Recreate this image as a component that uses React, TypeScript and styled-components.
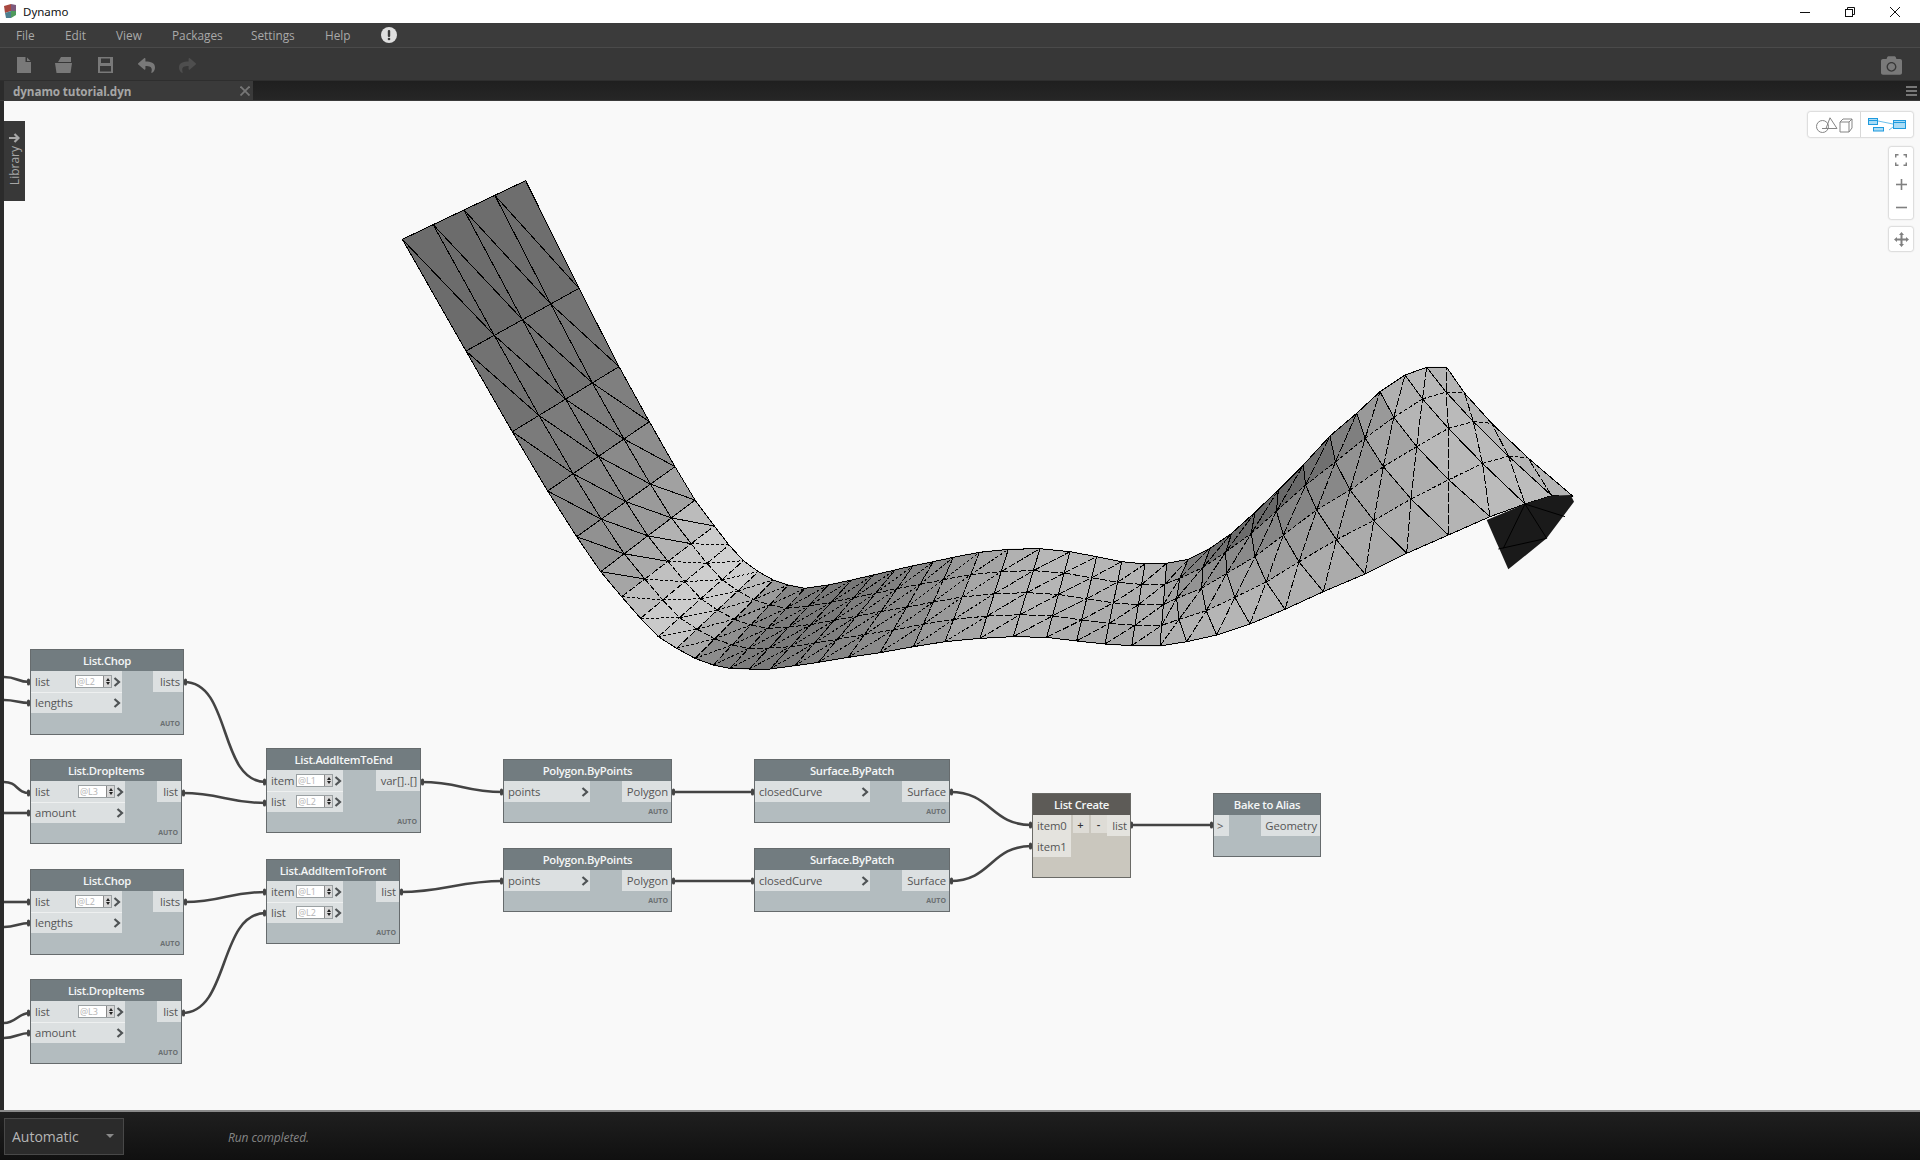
import React, { useMemo } from 'react';
import styled, { createGlobalStyle } from 'styled-components';
import { FaReply, FaShare, FaCamera } from 'react-icons/fa';

const GlobalStyle = createGlobalStyle`
  html, body { margin: 0; padding: 0; width: 1920px; height: 1160px; overflow: hidden; background: #f9f9f9; }
  * { box-sizing: border-box; }
  body { font-family: "Open Sans", "Noto Sans", sans-serif; }
`;

const Page = styled.div`
  width: 1920px; height: 1160px; display: flex; flex-direction: column;
`;
const TitleBar = styled.header`
  height: 23px; background: #fff; display: flex; align-items: center; padding-left: 4px; color: #111; font-size: 11.5px;
`;
const TitleText = styled.span`margin-left: 6px; font-family: "Noto Sans", "Open Sans", sans-serif;`;
const WindowControls = styled.div`margin-left: auto; display: flex; align-items: center; padding-right: 20px; gap: 35px;`;
const MenuBar = styled.nav`
  height: 25px; background: #3b3b3b; display: flex; align-items: center; border-bottom: 1px solid #4a4a4a; padding-left: 16px; color: #a9a9a9; font-size: 11.8px;
`;
const MenuItem = styled.span<{ $w: number }>`width: ${p => p.$w}px; flex: none;`;
const Toolbar = styled.div`
  height: 33px; background: #373737; display: flex; align-items: center; border-bottom: 1px solid #2e2e2e; padding: 2px 18px 0 17px;
`;
const ToolSlot = styled.span<{ $w: number; $c?: string }>`width: ${p => p.$w}px; flex: none; display: flex; align-items: center; color: ${p => p.$c || '#797979'};`;
const ToolEnd = styled.span`margin-left: auto; display: flex; color: #797979;`;
const TabBar = styled.div`
  height: 20px; display: flex; background: linear-gradient(#1f1f1f, #262626); border-bottom: 1px solid #3a3a3a; align-items: stretch;
`;
const TabEdge = styled.span`width: 4px; background: #2b2b2b;`;
const Tab = styled.div`
  width: 249px; background: #3a3a3a; display: flex; align-items: center; justify-content: space-between; padding: 0 3px 0 9px; color: #a6a6a6; font-weight: 700; font-size: 11.7px; letter-spacing: -0.1px;
`;
const TabMenu = styled.span`margin-left: auto; width: 11px; margin-right: 3px; display: flex; flex-direction: column; justify-content: center; gap: 2px;`;
const TabMenuBar = styled.i`display: block; height: 2px; background: #777;`;
const Middle = styled.div`flex: 1; display: flex; min-height: 0;`;
const LeftStrip = styled.div`width: 4px; background: #2b2b2b; flex: none;`;
const Canvas = styled.main`flex: 1; position: relative; background: #f9f9f9; overflow: hidden;`;
const Overlay = styled.svg`position: absolute; left: 0; top: 0; width: 1916px; height: 1009px;`;
const LibraryTab = styled.div`
  position: absolute; left: 0; top: 20px; width: 21px; height: 80px; background: #383838; color: #a6a6a6; display: flex; flex-direction: column; align-items: center; padding-top: 12px; gap: 3px; font-size: 12px;
`;
const LibraryLabel = styled.span`writing-mode: vertical-rl; transform: rotate(180deg); line-height: 1;`;
const FloatingPanel = styled.div<{ $top: number; $right: number }>`
  position: absolute; top: ${p => p.$top}px; right: ${p => p.$right}px; background: #fff; box-shadow: 0 0 2px rgba(0,0,0,.4); border-radius: 2px; display: flex;
`;
const ViewToggle = styled.span<{ $w: number; $border?: boolean }>`
  width: ${p => p.$w}px; height: 25px; display: flex; align-items: center; justify-content: center; ${p => p.$border ? 'border-right: 1px solid #d8d8d8;' : ''}
`;
const ZoomColumn = styled.div`width: 24px; display: flex; flex-direction: column; align-items: center; color: #808080;`;
const ZoomButton = styled.span<{ $h: number }>`height: ${p => p.$h}px; display: flex; align-items: center; justify-content: center;`;

const NodeCard = styled.section<{ $x: number; $y: number; $w: number; $h: number; $warm?: boolean }>`
  position: absolute; left: ${p => p.$x - 4}px; top: ${p => p.$y - 101}px; width: ${p => p.$w}px; height: ${p => p.$h}px;
  background: ${p => p.$warm ? '#cac7be' : '#b3bcbf'}; border: 1px solid ${p => p.$warm ? '#6a6a66' : '#666b6d'}; display: flex; flex-direction: column;
`;
const NodeHeader = styled.h3<{ $warm?: boolean }>`
  margin: 0; height: 21px; flex: none; background: ${p => p.$warm ? '#5d5b57' : '#727c80'}; color: #f4f6f6; font-size: 11.3px; font-weight: 600; text-align: center; line-height: 21px; letter-spacing: -0.28px;
`;
const NodeBody = styled.div`display: flex; justify-content: space-between; align-items: flex-start; flex: none;`;
const InputColumn = styled.div<{ $w: number }>`width: ${p => p.$w}px; flex: none; display: flex; flex-direction: column;`;
const PortRow = styled.div<{ $warm?: boolean; $sep?: boolean }>`
  height: 21px; background: ${p => p.$warm ? '#e4e3de' : '#dce0e1'}; display: flex; align-items: center; padding: 0 1px 0 4px; color: #555; font-size: 11.3px; ${p => p.$sep ? 'box-shadow: inset 0 1px 0 #eef0f0;' : ''}
`;
const PortLabel = styled.span`letter-spacing: -0.1px;`;
const OutputPort = styled.div<{ $w: number; $warm?: boolean }>`
  width: ${p => p.$w}px; height: 21px; flex: none; background: ${p => p.$warm ? '#e4e3de' : '#dce0e1'}; color: #555; font-size: 11.3px; display: flex; align-items: center; justify-content: flex-end; padding-right: 3px; letter-spacing: -0.1px; white-space: nowrap;
`;
const OutputLeft = styled(OutputPort)`justify-content: flex-start; padding-left: 3px;`;
const LevelBox = styled.span`
  margin-left: auto; width: 37px; height: 13px; background: #fff; border: 1px solid #9aa0a2; display: flex; align-items: stretch; color: #b4b4b4; font-size: 9px; line-height: 11px; padding-left: 1px;
`;
const LevelText = styled.span`flex: 1;`;
const Spinner = styled.span`width: 8px; flex: none; background: #d8d8d8; border-left: 1px solid #888; display: flex; flex-direction: column; justify-content: space-evenly; align-items: center;`;
const SpinUp = styled.i`width: 0; height: 0; border-left: 2px solid transparent; border-right: 2px solid transparent; border-bottom: 3px solid #222;`;
const SpinDown = styled.i`width: 0; height: 0; border-left: 2px solid transparent; border-right: 2px solid transparent; border-top: 3px solid #222;`;
const ChevronWrap = styled.svg<{ $auto?: boolean }>`width: 8px; height: 10px; flex: none; margin-left: ${p => p.$auto ? 'auto' : '1px'};`;
const NodeFooter = styled.div`margin-top: auto; height: 15px; flex: none; display: flex; justify-content: flex-end; padding-right: 3px; color: #6a6f71; font-size: 7px; font-weight: 700; line-height: 10px;`;
const AddRemove = styled.div`display: flex; gap: 2px; margin-left: 1px;`;
const SmallButton = styled.span`width: 16px; height: 18px; background: #dedcd6; color: #333; font-size: 11px; font-weight: 600; display: flex; align-items: center; justify-content: center;`;

const StatusBar = styled.footer`
  height: 50px; border-top: 2px solid #8a8a8a; background: linear-gradient(#1f1f1f, #101010); display: flex; align-items: center; padding-left: 4px;
`;
const RunSelect = styled.div`
  width: 120px; height: 37px; background: #2b2b2b; border: 1px solid #484848; display: flex; align-items: center; padding: 0 6px 0 7px; color: #b5b5b5; font-size: 14px; justify-content: space-between;
`;
const RunCaret = styled.i`width: 0; height: 0; border-left: 4px solid transparent; border-right: 4px solid transparent; border-top: 4px solid #8a8a8a; margin-right: 3px;`;
const RunStatus = styled.span`margin-left: 104px; margin-top: 2px; color: #858585; font-style: italic; font-size: 12px; letter-spacing: -0.1px;`;

/* ---- mesh ---- */
type St = { l: number[]; u: number[]; m?: number[]; gl: number; gu: number };
const z7 = (x: number, y: number) => [380 + x / 3, 170 + y / 3];
const z9 = (x: number, y: number) => [700 + x / 3, 500 + y / 3];
const z8 = (x: number, y: number) => [1150 + x / 3, 350 + y / 3];
const s = (z: (x: number, y: number) => number[], a: number, b: number, c: number, d: number, gl: number, gu: number, mx?: number, my?: number): St =>
  ({ l: z(a, b), u: z(c, d), m: mx !== undefined ? z(mx, my as number) : undefined, gl, gu });

const stations: St[] = [
  s(z7, 67, 208, 437, 32, 106, 108),
  s(z7, 258, 543, 597, 355, 110, 112),
  s(z7, 397, 785, 717, 590, 118, 122),
  s(z7, 503, 963, 808, 755, 128, 134),
  s(z7, 590, 1100, 885, 890, 138, 152),
  s(z7, 662, 1205, 945, 990, 150, 178),
  s(z7, 725, 1280, 1003, 1068, 178, 205),
  s(z7, 782, 1345, 1047, 1125, 198, 210),
  s(z7, 835, 1400, 1090, 1172, 205, 212),
  s(z7, 890, 1435, 1135, 1205, 186, 205),
  s(z7, 945, 1465, 1180, 1230, 150, 172),
  s(z7, 1000, 1485, 1225, 1245, 128, 142),
  s(z7, 1050, 1495, 1275, 1255, 124, 126),
  s(z9, 148, 507, 385, 255, 122, 118),
  s(z9, 210, 507, 455, 240, 122, 116),
  s(z9, 285, 497, 520, 225, 126, 118),
  s(z9, 355, 487, 585, 210, 130, 124),
  s(z9, 445, 472, 640, 197, 136, 130),
  s(z9, 540, 458, 700, 185, 140, 136),
  s(z9, 640, 440, 760, 172, 146, 144),
  s(z9, 735, 425, 838, 157, 160, 158),
  s(z9, 840, 415, 925, 148, 172, 172),
  s(z9, 940, 410, 1020, 146, 180, 182),
  s(z9, 1040, 412, 1110, 155, 176, 186),
  s(z9, 1130, 423, 1190, 170, 170, 186),
  s(z9, 1215, 432, 1265, 185, 166, 182),
  s(z9, 1295, 437, 1335, 192, 170, 182),
  s(z9, 1380, 438, 1400, 190, 176, 172),
  s(z8, 110, 875, 115, 628, 178, 125, 80, 745),
  s(z8, 200, 855, 180, 595, 184, 100, 155, 715),
  s(z8, 300, 822, 245, 550, 186, 92, 230, 670),
  s(z8, 405, 778, 315, 487, 182, 88, 315, 620),
  s(z8, 520, 725, 385, 420, 176, 86, 400, 555),
  s(z8, 645, 672, 460, 345, 174, 92, 500, 480),
  s(z8, 770, 610, 540, 258, 174, 104, 600, 420),
  s(z8, 895, 555, 620, 190, 178, 128, 700, 350),
  s(z8, 1020, 500, 690, 125, 186, 165, 800, 290),
  s(z8, 1125, 462, 765, 75, 190, 182, 895, 235),
  s(z8, 1205, 437, 830, 52, 186, 185, 970, 215),
  s(z8, 1270, 440, 890, 52, 176, 178, 1025, 220),
];

const pointAt = (st: St, v: number): number[] => {
  const mid = st.m || [(st.l[0] + st.u[0]) / 2, (st.l[1] + st.u[1]) / 2];
  const a = 2 * (v - 0.5) * (v - 1), b = -4 * v * (v - 1), c = 2 * v * (v - 0.5);
  return [a * st.l[0] + b * mid[0] + c * st.u[0], a * st.l[1] + b * mid[1] + c * st.u[1]];
};
const dashFor = (i: number, kind: 'st' | 'row' | 'diag') => {
  if (i < 6) return undefined;
  if (i < 13) return kind === 'st' ? '7 2' : kind === 'row' ? '6 2' : '3 2';
  if (i < 21) return kind === 'st' ? '8 1' : kind === 'row' ? '5 2' : '3 2';
  if (i < 28) return kind === 'st' ? undefined : kind === 'row' ? '7 2' : '7 2';
  return kind === 'st' ? undefined : kind === 'row' ? '4 2' : '9 2';
};

const SurfaceMesh = () => {
  const mesh = useMemo(() => {
    const R = 4;
    const grid = stations.map(st => Array.from({ length: R + 1 }, (_, j) => pointAt(st, j / R)));
    const cells: { pts: string; c: string }[] = [];
    const lines: { a: number[]; b: number[]; dash?: string }[] = [];
    for (let i = 0; i < stations.length; i++) {
      for (let j = 0; j < R; j++) lines.push({ a: grid[i][j], b: grid[i][j + 1], dash: dashFor(i, 'st') });
      if (i === stations.length - 1) break;
      for (let j = 0; j <= R; j++) {
        lines.push({ a: grid[i][j], b: grid[i + 1][j], dash: j === 0 || j === R ? undefined : dashFor(i, 'row') });
        if (j < R) {
          const v = Math.pow((j + 0.5) / R, 1.5);
          const g0 = stations[i].gl + (stations[i].gu - stations[i].gl) * v;
          const g1 = stations[i + 1].gl + (stations[i + 1].gu - stations[i + 1].gl) * v;
          const g = Math.round((g0 + g1) / 2);
          cells.push({ pts: [grid[i][j], grid[i + 1][j], grid[i + 1][j + 1], grid[i][j + 1]].map(p => p.join(',')).join(' '), c: `rgb(${g},${g},${g})` });
          lines.push({ a: grid[i][j], b: grid[i + 1][j + 1], dash: dashFor(i, 'diag') });
        }
      }
    }
    return { cells, lines };
  }, []);
  const cap = [[1010, 510], [1075, 658], [1190, 565], [1272, 455], [1262, 435], [1205, 437], [1125, 462]].map(p => z8(p[0], p[1]));
  return (
    <g>
      {mesh.cells.map((c, i) => <polygon key={i} points={c.pts} fill={c.c} stroke={c.c} strokeWidth={0.7} />)}
      <g stroke="#000" strokeWidth={1} shapeRendering="crispEdges">
        {mesh.lines.map((l, i) => <line key={i} x1={l.a[0]} y1={l.a[1]} x2={l.b[0]} y2={l.b[1]} strokeDasharray={l.dash} />)}
      </g>
      <polygon points={cap.map(p => p.join(',')).join(' ')} fill="#1a1a1a" />
      <g stroke="#000" strokeWidth={1} fill="none">
        <path d={`M${z8(1125, 462)} L${z8(1060, 595)} M${z8(1125, 462)} L${z8(1190, 565)} M${z8(1125, 462)} L${z8(1245, 500)} M${z8(1045, 597)} L${z8(1190, 565)}`} />
      </g>
    </g>
  );
};

/* ---- wires ---- */
const wires: number[][] = [
  [4, 677, 30, 682, 14], [4, 700, 30, 703, 12], [4, 782, 30, 793, 14], [4, 813, 30, 813, 10],
  [4, 902, 30, 902, 10], [4, 927, 30, 923, 12], [4, 1023, 30, 1013, 12], [4, 1038, 30, 1033, 12],
  [184, 682, 266, 782, 48], [182, 793, 266, 803, 40], [421, 782, 503, 792, 40], [672, 792, 754, 792, 30],
  [950, 792, 1032, 825, 42], [184, 902, 266, 892, 40], [182, 1013, 266, 913, 48], [400, 892, 503, 881, 45],
  [672, 881, 754, 881, 30], [950, 881, 1032, 846, 42], [1130, 825, 1213, 825, 30],
];
const Wires = () => (
  <g fill="none" stroke="#444" strokeWidth={2.6}>
    {wires.map((w, i) => (
      <path key={i} d={`M${w[0]} ${w[1]} C${w[0] + w[4]} ${w[1]} ${w[2] - w[4]} ${w[3]} ${w[2]} ${w[3]}`} />
    ))}
    {wires.map((w, i) => (
      <g key={`n${i}`} fill="#444" stroke="none">
        {w[0] > 4 && <rect x={w[0]} y={w[1] - 3.5} width={3} height={7} rx={1.5} />}
        <rect x={w[2] - 3} y={w[3] - 3.5} width={3} height={7} rx={1.5} />
      </g>
    ))}
  </g>
);

/* ---- nodes ---- */
type InputDef = { label: string; level?: string };
type NodeDef = { title: string; x: number; y: number; w: number; h: number; inW: number; inputs: InputDef[]; output: string; outW: number };
const nodes: NodeDef[] = [
  { title: 'List.Chop', x: 30, y: 649, w: 154, h: 86, inW: 91, inputs: [{ label: 'list', level: '@L2' }, { label: 'lengths' }], output: 'lists', outW: 30 },
  { title: 'List.DropItems', x: 30, y: 759, w: 152, h: 85, inW: 94, inputs: [{ label: 'list', level: '@L3' }, { label: 'amount' }], output: 'list', outW: 24 },
  { title: 'List.AddItemToEnd', x: 266, y: 748, w: 155, h: 85, inW: 76, inputs: [{ label: 'item', level: '@L1' }, { label: 'list', level: '@L2' }], output: 'var[]..[]', outW: 44 },
  { title: 'List.Chop', x: 30, y: 869, w: 154, h: 86, inW: 91, inputs: [{ label: 'list', level: '@L2' }, { label: 'lengths' }], output: 'lists', outW: 30 },
  { title: 'List.DropItems', x: 30, y: 979, w: 152, h: 85, inW: 94, inputs: [{ label: 'list', level: '@L3' }, { label: 'amount' }], output: 'list', outW: 24 },
  { title: 'List.AddItemToFront', x: 266, y: 859, w: 134, h: 85, inW: 76, inputs: [{ label: 'item', level: '@L1' }, { label: 'list', level: '@L2' }], output: 'list', outW: 23 },
  { title: 'Polygon.ByPoints', x: 503, y: 759, w: 169, h: 64, inW: 86, inputs: [{ label: 'points' }], output: 'Polygon', outW: 49 },
  { title: 'Surface.ByPatch', x: 754, y: 759, w: 196, h: 64, inW: 115, inputs: [{ label: 'closedCurve' }], output: 'Surface', outW: 47 },
  { title: 'Polygon.ByPoints', x: 503, y: 848, w: 169, h: 64, inW: 86, inputs: [{ label: 'points' }], output: 'Polygon', outW: 49 },
  { title: 'Surface.ByPatch', x: 754, y: 848, w: 196, h: 64, inW: 115, inputs: [{ label: 'closedCurve' }], output: 'Surface', outW: 47 },
];

const Chevron = ({ auto }: { auto?: boolean }) => (
  <ChevronWrap $auto={auto} viewBox="0 0 8 10">
    <polyline points="1.5,1 6,5 1.5,9" fill="none" stroke="#4f5355" strokeWidth={2.2} />
  </ChevronWrap>
);

const FunctionNode = ({ n }: { n: NodeDef }) => (
  <NodeCard $x={n.x} $y={n.y} $w={n.w} $h={n.h}>
    <NodeHeader>{n.title}</NodeHeader>
    <NodeBody>
      <InputColumn $w={n.inW}>
        {n.inputs.map((inp, i) => (
          <PortRow key={i} $sep={i > 0}>
            <PortLabel>{inp.label}</PortLabel>
            {inp.level && (
              <LevelBox>
                <LevelText>{inp.level}</LevelText>
                <Spinner><SpinUp /><SpinDown /></Spinner>
              </LevelBox>
            )}
            <Chevron auto={!inp.level} />
          </PortRow>
        ))}
      </InputColumn>
      <OutputPort $w={n.outW}>{n.output}</OutputPort>
    </NodeBody>
    <NodeFooter>AUTO</NodeFooter>
  </NodeCard>
);

const Logo = () => (
  <svg width="13" height="15" viewBox="0 0 13 15">
    <polygon points="0,2 7,0 7,7 1,9" fill="#a8483f" />
    <polygon points="7,0 12,1 12,7 7,7" fill="#7d5a7e" />
    <polygon points="1,9 7,7 7,14 2,14" fill="#4d7f8f" />
    <polygon points="7,7 12,7 12,11 7,14" fill="#4f9a5c" />
  </svg>
);

const App = () => (
  <Page>
    <GlobalStyle />
    <TitleBar>
      <Logo />
      <TitleText>Dynamo</TitleText>
      <WindowControls>
        <svg width="10" height="10" viewBox="0 0 10 10"><line x1="0" y1="5.5" x2="10" y2="5.5" stroke="#111" /></svg>
        <svg width="10" height="10" viewBox="0 0 10 10" fill="none" stroke="#111"><rect x="0.5" y="2.5" width="7" height="7" /><path d="M2.5 2.5V0.5H9.5V7.5H7.5" /></svg>
        <svg width="10" height="10" viewBox="0 0 10 10" stroke="#111"><line x1="0" y1="0" x2="10" y2="10" /><line x1="10" y1="0" x2="0" y2="10" /></svg>
      </WindowControls>
    </TitleBar>
    <MenuBar>
      <MenuItem $w={49}>File</MenuItem>
      <MenuItem $w={51}>Edit</MenuItem>
      <MenuItem $w={56}>View</MenuItem>
      <MenuItem $w={79}>Packages</MenuItem>
      <MenuItem $w={74}>Settings</MenuItem>
      <MenuItem $w={56}>Help</MenuItem>
      <svg width="16" height="16" viewBox="0 0 16 16">
        <circle cx="8" cy="8" r="8" fill="#dedede" />
        <rect x="6.8" y="3" width="2.4" height="7" rx="1" fill="#3b3b3b" />
        <circle cx="8" cy="12" r="1.3" fill="#3b3b3b" />
      </svg>
    </MenuBar>
    <Toolbar>
      <ToolSlot $w={38}>
        <svg width="14" height="16" viewBox="0 0 14 16" fill="currentColor"><path d="M0 0H8.5V5H14V16H0Z" /><path d="M10 0.5L13.5 4H10Z" /></svg>
      </ToolSlot>
      <ToolSlot $w={43}>
        <svg width="18" height="16" viewBox="0 0 18 16" fill="currentColor"><path d="M3 5L6 0H16V5Z" /><path d="M0 6H17L15.5 16H1.5Z" /></svg>
      </ToolSlot>
      <ToolSlot $w={40}>
        <svg width="15" height="16" viewBox="0 0 15 16"><path fillRule="evenodd" d="M0 0H15V16H0ZM3 1.5V6H12V1.5ZM2 9V14.5H13V9Z" fill="currentColor" /></svg>
      </ToolSlot>
      <ToolSlot $w={41}><FaReply size={17} /></ToolSlot>
      <ToolSlot $w={40} $c="#4e4e4e"><FaShare size={17} /></ToolSlot>
      <ToolEnd><FaCamera size={21} /></ToolEnd>
    </Toolbar>
    <TabBar>
      <TabEdge />
      <Tab>
        <span>dynamo tutorial.dyn</span>
        <svg width="10" height="10" viewBox="0 0 10 10" stroke="#777" strokeWidth="1.8"><line x1="0.5" y1="0.5" x2="9.5" y2="9.5" /><line x1="9.5" y1="0.5" x2="0.5" y2="9.5" /></svg>
      </Tab>
      <TabMenu><TabMenuBar /><TabMenuBar /><TabMenuBar /></TabMenu>
    </TabBar>
    <Middle>
      <LeftStrip />
      <Canvas>
        <Overlay viewBox="4 101 1916 1009">
          <SurfaceMesh />
          <Wires />
        </Overlay>
        {nodes.map((n, i) => <FunctionNode key={i} n={n} />)}
        <NodeCard $x={1032} $y={793} $w={99} $h={85} $warm>
          <NodeHeader $warm>List Create</NodeHeader>
          <NodeBody>
            <InputColumn $w={38}>
              <PortRow $warm><PortLabel>item0</PortLabel></PortRow>
              <PortRow $warm><PortLabel>item1</PortLabel></PortRow>
            </InputColumn>
            <AddRemove><SmallButton>+</SmallButton><SmallButton>-</SmallButton></AddRemove>
            <OutputPort $w={23} $warm>list</OutputPort>
          </NodeBody>
        </NodeCard>
        <NodeCard $x={1213} $y={793} $w={108} $h={64}>
          <NodeHeader>Bake to Alias</NodeHeader>
          <NodeBody>
            <OutputLeft $w={15}>&gt;</OutputLeft>
            <OutputPort $w={59}>Geometry</OutputPort>
          </NodeBody>
        </NodeCard>
        <LibraryTab>
          <svg width="11" height="10" viewBox="0 0 11 10" fill="none" stroke="#a6a6a6" strokeWidth="2.2"><path d="M0 5H9M5.5 1L9.5 5L5.5 9" /></svg>
          <LibraryLabel>Library</LibraryLabel>
        </LibraryTab>
        <FloatingPanel $top={11} $right={7}>
          <ViewToggle $w={53} $border>
            <svg width="37" height="16" viewBox="0 0 37 16" fill="none" stroke="#858585" strokeWidth="1">
              <circle cx="6.5" cy="9.5" r="6" />
              <path d="M14 0.8L21 11.5H6" />
              <path d="M10 11.5L14 0.8" />
              <path d="M24 5H33V15H24ZM24 5L27 2H36V11L33 15M33 5L36 2" />
            </svg>
          </ViewToggle>
          <ViewToggle $w={52}>
            <svg width="38" height="14" viewBox="0 0 38 14" stroke="#1e9ade" strokeWidth="1">
              <path d="M10 3L25 6M21 12L25 9" fill="none" stroke="#6cc0ec" />
              <rect x="0.5" y="0.5" width="9" height="6" fill="#a9dcf6" />
              <line x1="0.5" y1="2.5" x2="9.5" y2="2.5" />
              <rect x="5.5" y="9.5" width="10" height="3.5" fill="#a9dcf6" />
              <rect x="25.5" y="2.5" width="12" height="8" fill="#a9dcf6" />
              <line x1="25.5" y1="4.5" x2="37.5" y2="4.5" />
            </svg>
          </ViewToggle>
        </FloatingPanel>
        <FloatingPanel $top={46} $right={7}>
          <ZoomColumn>
            <ZoomButton $h={26}>
              <svg width="12" height="12" viewBox="0 0 12 12" fill="none" stroke="currentColor" strokeWidth="1.5"><path d="M0.7 3.5V0.7H3.5M8.5 0.7H11.3V3.5M11.3 8.5V11.3H8.5M3.5 11.3H0.7V8.5" /></svg>
            </ZoomButton>
            <ZoomButton $h={23}>
              <svg width="11" height="11" viewBox="0 0 11 11" stroke="currentColor" strokeWidth="1.6"><line x1="5.5" y1="0" x2="5.5" y2="11" /><line x1="0" y1="5.5" x2="11" y2="5.5" /></svg>
            </ZoomButton>
            <ZoomButton $h={23}>
              <svg width="11" height="3" viewBox="0 0 11 3" stroke="currentColor" strokeWidth="1.6"><line x1="0" y1="1.5" x2="11" y2="1.5" /></svg>
            </ZoomButton>
          </ZoomColumn>
        </FloatingPanel>
        <FloatingPanel $top={126} $right={7}>
          <ZoomColumn>
            <ZoomButton $h={24}>
              <svg width="15" height="15" viewBox="0 0 15 15" fill="currentColor"><path d="M7.5 0L10 3H8.5V6.5H12V5L15 7.5L12 10V8.5H8.5V12H10L7.5 15L5 12H6.5V8.5H3V10L0 7.5L3 5V6.5H6.5V3H5Z" /></svg>
            </ZoomButton>
          </ZoomColumn>
        </FloatingPanel>
      </Canvas>
    </Middle>
    <StatusBar>
      <RunSelect><span>Automatic</span><RunCaret /></RunSelect>
      <RunStatus>Run completed.</RunStatus>
    </StatusBar>
  </Page>
);

export default App;
